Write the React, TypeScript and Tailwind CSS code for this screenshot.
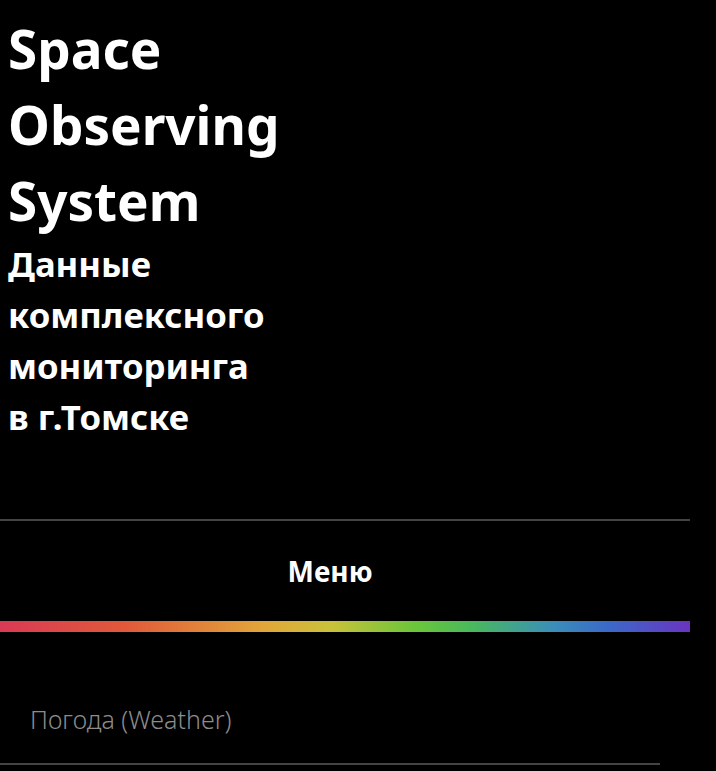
import React from 'react';

const menuItems = ['Погода (Weather)'];

export default function App() {
  return (
    <div className="min-h-[771px] bg-black text-white font-['Noto_Sans',sans-serif]">
      <div className="w-[690px]">
        {/* Header */}
        <header className="px-2 pt-[11px] pb-[77px]">
          <h1 className="text-[53px] font-bold leading-[76px]">
            Space
            <br />
            Observing
            <br />
            System
          </h1>
          <h2 className="text-[34.7px] font-bold leading-[51px] -mt-[1px]">
            Данные
            <br />
            комплексного
            <br />
            мониторинга
            <br />в г.Томске
          </h2>
        </header>

        {/* Menu */}
        <nav className="border-t-2 border-[#444]">
          <div className="h-[100px] flex items-center justify-center pr-[30px]">
            <span className="text-[28px] font-bold">Меню</span>
          </div>
          <div className="h-[11px] bg-[linear-gradient(to_right,#d93a55,#e0593a_18%,#e2a53a_38%,#c9c23a_48%,#6cc63a_60%,#4aba5a_68%,#3a8fb8_80%,#3a6ac8_88%,#6a34c0)]" />
          <ul className="pt-[69px]">
            {menuItems.map((item) => (
              <li key={item} className="w-[660px] border-b-2 border-[#444] pl-[30px] pb-[24px]">
                <a className="text-[25px] font-light text-[#8c8c8c]">{item}</a>
              </li>
            ))}
          </ul>
        </nav>
      </div>
    </div>
  );
}
